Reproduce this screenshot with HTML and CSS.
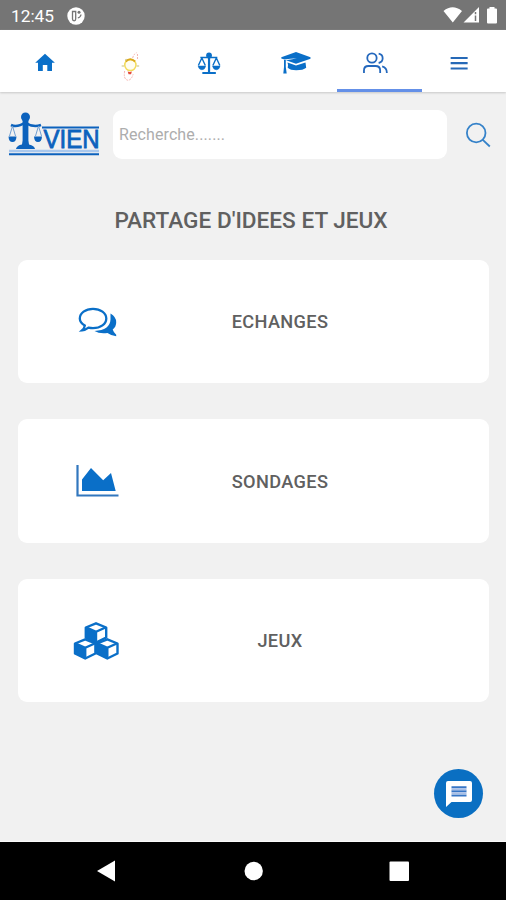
FILE: index.html
```html
<!DOCTYPE html>
<html lang="fr">
<head>
<meta charset="utf-8">
<title>VIEN</title>
<link rel="stylesheet" href="styles.css">
</head>
<body>
<header class="status">
  <span class="time">12:45</span>
  <svg class="status-app" viewBox="0 0 18 18"><circle cx="9" cy="9" r="8.700" fill="#fff"/><path d="M5.500 4.500v7.500q0 1.800 1.600 1.800t1.600-1.800V4.500z" fill="none" stroke="#757575" stroke-width="1.300"/><path d="M10.800 11q2.800-.8 3.200-3.500" fill="none" stroke="#757575" stroke-width="1.300"/><circle cx="12" cy="5.200" r="1.500" fill="#757575"/></svg>
  <svg class="status-icons" viewBox="440 0 60 30"><path d="M443.500 11q9-7.500 18.500 0l-9.200 11.500zM479 7v15.500h-15.500zM487 9.500q0-1 1-1h1.500V7h5v1.500h1.500q1 0 1 1v13q0 1-1 1h-8q-1 0-1-1z" fill="#fff"/><path d="M475.500 12v2.200M475.500 15.500V21" stroke="#757575" stroke-width="1.500"/></svg>
</header>
<nav class="tabs">
  <a class="tab"><svg viewBox="0 30 84.333 62"><path d="M45 53.800l-9.800 8.900h2.800V71h4.800v-6h4.500v6h4.700v-8.300h2.900z" fill="#0a6fc8"/></svg></a>
  <a class="tab"><svg viewBox="84.333 30 84.333 62"><g fill="none"><circle cx="130.700" cy="65" r="5.600" fill="#fffdf0" stroke="#f3dc5c" stroke-width="1.500"/><path d="M126 61.500q4.500-4.500 9.500 0" stroke="#dba91c" stroke-width="2"/><path d="M122 66h2.500M137 66h2.500M126 59l1 1.500" stroke="#c7bd79" stroke-width="1.200"/><path d="M133 58q1-4 4-5.300M137.800 54v5M125 71q-1.500 8 3 9.200 3.500.3 5.500-6" stroke="#f4b4ae" stroke-dasharray="2 1"/><path d="M128 71.500l2 .500 2.200-.500-.8 2.700h-2.500z" fill="#e44b3c"/></g></svg></a>
  <a class="tab"><svg viewBox="168.667 30 84.333 62"><g fill="none" stroke="#0a6fc8" stroke-width="1.400"><path d="M202 73h13.500M208.700 54v18.500" stroke-width="2.200"/><path d="M200 57.500h17M201.500 58l-3.500 7.500M201.500 58l3.500 7.500M216 58l-3.500 7.500M216 58l3.500 7.500"/><path d="M197.800 66h7.500q-.7 3.800-3.700 3.800T197.800 66zM212.200 66h7.500q-.7 3.800-3.700 3.800t-3.800-3.800z" fill="#0a6fc8" stroke-width=".500"/><circle cx="208.700" cy="55.500" r="2.200" fill="#0a6fc8"/></g></svg></a>
  <a class="tab"><svg viewBox="253 30 84.333 62"><g fill="#0a6fc8"><path d="M296 52l14.500 5.300v1.400L296 63.700l-10-3.500q7-1.200 11-2-7 .300-12.500 1.400l-3.200-1.100v-1.200z"/><path d="M287.500 62.500l8.500 3 9.500-3 .7 5.200q-3 2.500-10 2.500-6 0-8.500-2.500.8-2.700-.2-5.200z"/><path d="M284 60h1.800v7l.9 6.500h-3.400l.7-6.500z"/></g></svg></a>
  <a class="tab active"><svg viewBox="337.333 30 84.333 62"><g fill="none" stroke="#2468bd" stroke-width="1.800"><circle cx="372.300" cy="58" r="4.700"/><path d="M364.300 73v-2.500q0-4.500 4.500-4.500h7q4.700 0 4.700 4.500V73M379 53.700q4 .800 4 4.600t-4 4.700M382.500 66.300q4.700 1 4.700 6.700"/></g></svg></a>
  <a class="tab"><svg viewBox="421.667 30 84.333 62"><path d="M450.300 58h17M450.300 63.200h17M450.300 68.500h17" stroke="#2669b7" stroke-width="2.200"/></svg></a>
</nav>
<main>
  <div class="search-row">
    <svg class="logo" viewBox="0 105 113 60"><g fill="none" stroke="#0c62bd"><path d="M42 127.500h57M9 154.300h90" stroke-width="1.900"/><path d="M9 151h90" stroke="#a9c8ed" stroke-width="2.500"/><path d="M25.500 119v26" stroke-width="5.800"/><path d="M11 125q6 3 14-2.500 8 5.500 16 2.500" stroke-width="2.600"/><path d="M12.500 126l-3 10M12.500 126l3 10M38.500 126l-3 10M38.500 126l3 10" stroke="#719fd2" stroke-width="1"/></g><g fill="#0c62bd"><circle cx="25.500" cy="117" r="4.500"/><path d="M8.500 136.500h8q-.3 5.500-4 5.500t-4-5.500zM34 136.500h8q-.3 5.500-4 5.500t-4-5.500zM16 149q.5-3.500 6-4.500l1-4h5l1 4q5.500 1 6 4.500z"/></g><text class="logo-text" x="43.500" y="148.300" textLength="56" lengthAdjust="spacingAndGlyphs">VIEN</text></svg>
    <input class="search" type="text" placeholder="Recherche.......">
    <svg class="magnifier" viewBox="447 105 59 60"><g fill="none" stroke="#3582c9" stroke-width="1.800"><circle cx="476.200" cy="133" r="9.300"/><path d="M482.800 139.800l7 6.700"/></g></svg>
  </div>
  <h1>PARTAGE D'IDEES ET JEUX</h1>
  <section class="cards">
    <a class="card"><svg viewBox="60 295 80 60"><path d="M110.500 313.500q5.700 3.300 5.700 8.700 0 4.700-3.500 7.300 1 3.200 3.500 5.300v1.500q-4.500-.3-8.700-3.300-7.800 1.200-13-2 15.500-1 16-11.500z" fill="#0a6fc8"/><path d="M93 308.800c7.500 0 13.300 4.300 13.300 9.700s-5.800 9.700-13.300 9.700q-2.200 0-4.500-.5-3.200 2.500-6.500 2.700 2.500-2.200 2.800-4.800c-3.200-2-5-4.300-5-7.100 0-5.400 5.700-9.700 13.200-9.700z" fill="#fff" stroke="#0a6fc8" stroke-width="2.300"/></svg><span>ECHANGES</span></a>
    <a class="card"><svg viewBox="60 455 80 60"><path d="M77.500 465v30.500H118.500" fill="none" stroke="#3277be" stroke-width="2.200"/><path d="M82 491v-11.500L91 468l12.200 12.200 7.800-7.200 4.700 18z" fill="#0a6fc8"/></svg><span>SONDAGES</span></a>
    <a class="card"><svg viewBox="60 610 80 60"><defs><g id="cube"><path d="M0-8.700L10.200-4.500V5.500L0 10.500-10.200 5.500V-4.500z" fill="#fff" stroke="#0a6fc8" stroke-width="2.400" stroke-linejoin="round"/><path d="M-10.200-4.500L0-.2V10.500L-10.200 5.500z" fill="#0a6fc8"/><path d="M-9.500-4.500L0-.2 9.500-4.500M0-.2v10" fill="none" stroke="#0a6fc8" stroke-width="2.400"/></g></defs><use href="#cube" x="96" y="632"/><use href="#cube" x="85.200" y="648"/><use href="#cube" x="107.300" y="648"/></svg><span>JEUX</span></a>
  </section>
  <button class="chat" aria-label="Messages"><svg viewBox="434 769 49 49"><path d="M448 781h22q2 0 2 2v17q0 2-2 2h-18.500l-5.500 5v-24q0-2 2-2z" fill="#fff"/><path d="M451.500 787.200h15M451.500 791.300h15M451.500 795.400h15" stroke="#3776c6" stroke-width="2"/><path d="M451.500 789.200h15M451.500 793.300h15" stroke="#a8bfe6" stroke-width="2"/></svg></button>
</main>
<footer class="system-nav"><svg viewBox="0 842 506 58"><path d="M97 871l18-10.500v21z" fill="#fff"/><circle cx="253.700" cy="871" r="9.200" fill="#fff"/><rect x="389.500" y="861.500" width="19.500" height="19.500" rx="1" fill="#fff"/></svg></footer>
</body>
</html>
```

FILE: styles.css
```css
* { box-sizing: border-box; }
body { margin: 0; height: 900px; display: flex; flex-direction: column; overflow: hidden; background: #f1f1f1; font-family: Roboto, sans-serif; }
svg { display: block; }
.status { height: 30px; flex: none; display: flex; align-items: center; background: #757575; color: #fff; }
.time { width: 67px; padding: 2px 0 0 11px; font-size: 17.3px; }
.status-app { width: 18px; height: 18px; margin-top: 1px; }
.status-icons { width: 60px; height: 30px; margin: 0 6px 0 auto; }
.tabs { height: 62px; flex: none; display: grid; grid-template-columns: repeat(6, 1fr); background: #fff; box-shadow: 0 1px 2px #c8c8c8; position: relative; }
.tab svg { width: 100%; height: 62px; }
.active { box-shadow: inset 0 -3px #6490e8; }
main { flex: 1; position: relative; padding-top: 13px; border-bottom: 1px solid #fafafa; }
.search-row { height: 60px; display: flex; }
.logo { width: 113px; height: 60px; flex: none; }
.logo-text { font: 25px "Liberation Sans", sans-serif; fill: #0c62bd; stroke: #0c62bd; stroke-width: .8px; }
.search { flex: 1; min-width: 0; height: 49px; margin: 5px 0 0; padding: 0 6px; border: 0; border-radius: 9px; background: #fff; font: 16px Roboto, sans-serif; letter-spacing: .1px; }
.search::placeholder { color: #adadad; opacity: 1; }
.magnifier { width: 59px; height: 60px; flex: none; }
h1 { margin: 43px 0 0; padding-right: 4px; height: 26px; line-height: 26px; text-align: center; font-size: 22.6px; font-weight: 500; color: #606060; }
.cards { margin: 26px 17px 0 18px; display: grid; gap: 36.2px; }
.card { height: 123.3px; display: grid; grid-template-columns: 158px 208px; align-items: center; background: #fff; border-radius: 9px; }
.card svg { width: 80px; height: 60px; margin-left: 42px; }
.card:nth-child(1) svg { margin-top: 7px; }
.card:nth-child(2) svg { margin-top: 7px; }
.card:nth-child(3) svg { margin-top: -1px; }
.card span { text-align: center; font-size: 18.2px; font-weight: 500; color: #606060; letter-spacing: .35px; }
.chat { position: absolute; right: 23px; bottom: 23px; width: 49px; height: 49px; padding: 0; border: 0; border-radius: 50%; background: #0a6fc2; }
.system-nav { height: 58px; flex: none; background: #000; }
.system-nav svg { width: 100%; height: 58px; }
```
